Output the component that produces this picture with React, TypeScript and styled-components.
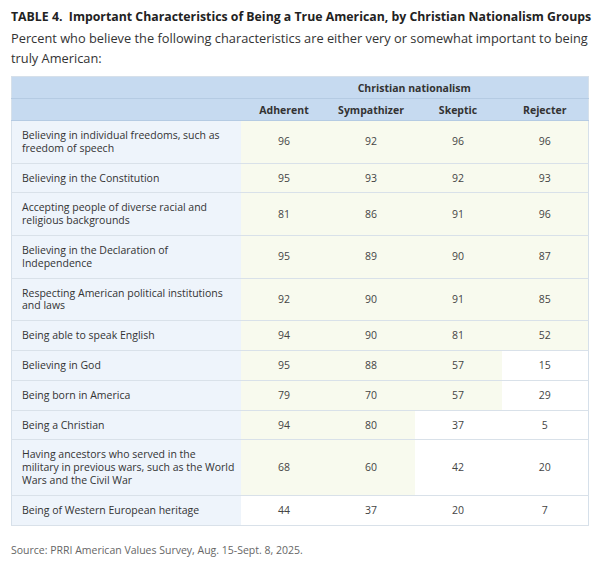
import React from "react";
import styled, { createGlobalStyle } from "styled-components";

const Global = createGlobalStyle`
  html, body { margin: 0; padding: 0; background: #ffffff; }
  body { font-family: "Open Sans", "DejaVu Sans", sans-serif; color: #333; }
`;

const Page = styled.div`
  padding: 8px 10px 0 11px;
  width: 579px;
`;

const Title = styled.h1`
  margin: 0;
  font-size: 12.3px;
  line-height: 18px;
  font-weight: 700;
  color: #222;
  white-space: nowrap;
`;

const Subtitle = styled.p`
  margin: 2px 0 0 0;
  font-size: 12.8px;
  line-height: 20px;
  color: #333;
`;

const Table = styled.table`
  margin-top: 8px;
  width: 578px;
  border-collapse: collapse;
  table-layout: fixed;
  font-size: 10.5px;
  border: 1px solid #d6e0ea;
`;

const HeadCell = styled.th`
  background: #c6daf0;
  font-weight: 700;
  color: #333;
  text-align: center;
  height: 21px;
  padding: 0;
  font-size: 10.5px;
  border-bottom: 1px solid #b5cbe3;
`;

const Row = styled.tr`
  border-bottom: 1px solid #d9e1e9;
`;

const LabelCell = styled.td`
  background: #eef4fb;
  padding: 8px 4px 8px 10px;
  line-height: 12.8px;
  color: #333;
  text-align: left;
  vertical-align: middle;
  white-space: pre-line;
`;

const ValueCell = styled.td<{ $hi: boolean }>`
  background: ${(p) => (p.$hi ? "#f8faee" : "#ffffff")};
  text-align: center;
  padding: 8px 0;
  line-height: 12.8px;
  color: #444;
`;

const Source = styled.p`
  margin: 17px 0 0 0;
  font-size: 10.5px;
  color: #666;
`;

const rows: [string, number[]][] = [
  ["Believing in individual freedoms, such as\nfreedom of speech", [96, 92, 96, 96]],
  ["Believing in the Constitution", [95, 93, 92, 93]],
  ["Accepting people of diverse racial and\nreligious backgrounds", [81, 86, 91, 96]],
  ["Believing in the Declaration of\nIndependence", [95, 89, 90, 87]],
  ["Respecting American political institutions\nand laws", [92, 90, 91, 85]],
  ["Being able to speak English", [94, 90, 81, 52]],
  ["Believing in God", [95, 88, 57, 15]],
  ["Being born in America", [79, 70, 57, 29]],
  ["Being a Christian", [94, 80, 37, 5]],
  ["Having ancestors who served in the\nmilitary in previous wars, such as the World\nWars and the Civil War", [68, 60, 42, 20]],
  ["Being of Western European heritage", [44, 37, 20, 7]],
];

const groups = ["Adherent", "Sympathizer", "Skeptic", "Rejecter"];

export default function App() {
  return (
    <>
      <Global />
      <Page>
        <Title>TABLE 4.&nbsp; Important Characteristics of Being a True American, by Christian Nationalism Groups</Title>
        <Subtitle>
          Percent who believe the following characteristics are either very or somewhat important to being truly American:
        </Subtitle>
        <Table>
          <colgroup>
            <col style={{ width: 229 }} />
            <col />
            <col />
            <col />
            <col />
          </colgroup>
          <thead>
            <tr>
              <HeadCell />
              <HeadCell colSpan={4}>Christian nationalism</HeadCell>
            </tr>
            <tr>
              <HeadCell />
              {groups.map((g) => (
                <HeadCell key={g}>{g}</HeadCell>
              ))}
            </tr>
          </thead>
          <tbody>
            {rows.map(([label, vals]) => (
              <Row key={label}>
                <LabelCell>{label}</LabelCell>
                {vals.map((v, i) => (
                  <ValueCell key={i} $hi={v > 50}>
                    {v}
                  </ValueCell>
                ))}
              </Row>
            ))}
          </tbody>
        </Table>
        <Source>Source: PRRI American Values Survey, Aug. 15-Sept. 8, 2025.</Source>
      </Page>
    </>
  );
}
